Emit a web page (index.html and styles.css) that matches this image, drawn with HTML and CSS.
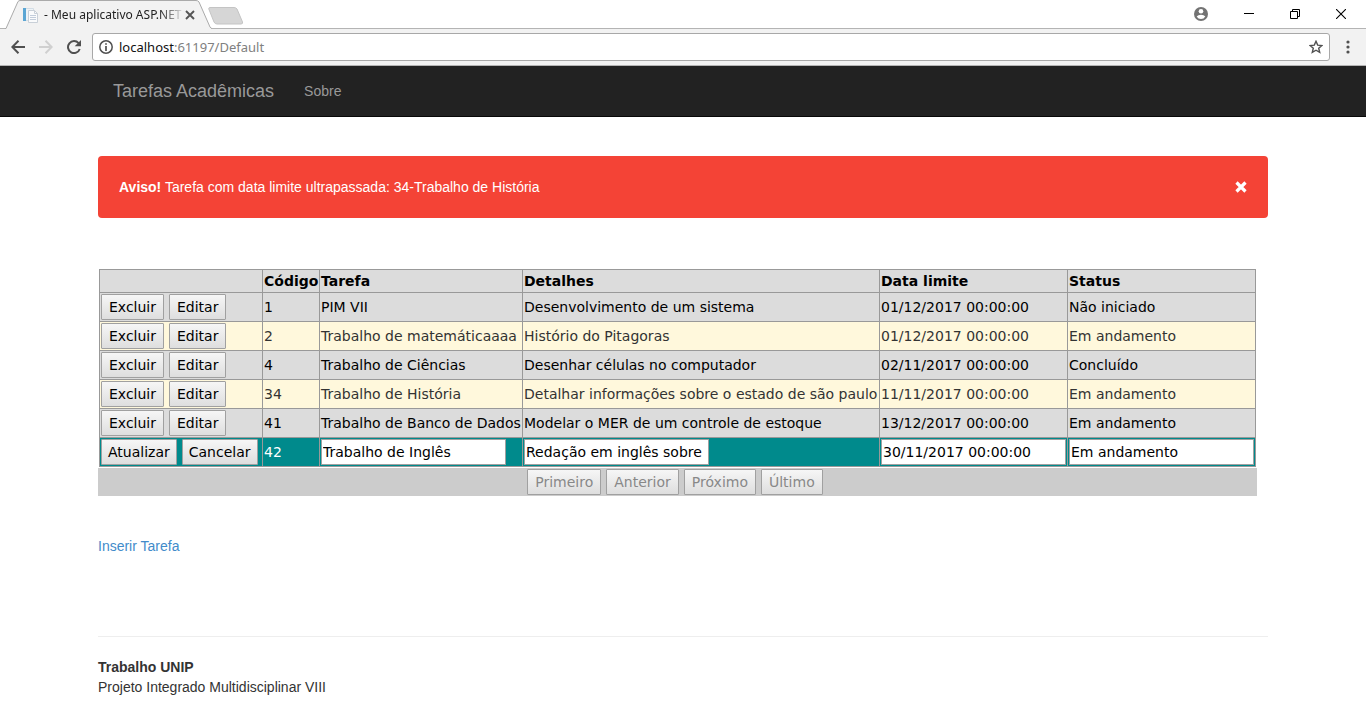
FILE: index.html
```html
<!DOCTYPE html>
<html lang="pt-BR">
<head>
<meta charset="utf-8">
<title>- Meu aplicativo ASP.NET</title>
<link rel="stylesheet" href="styles.css">
</head>
<body>
<header class="browser">
  <div class="tab-strip">
    <div class="tab">
      <svg class="tab-shape" width="207" height="29" viewBox="0 0 207 29"><path d="M0 28.500L1 28.500L13 1.500Q14 .5 15 .5H191Q193 .5 194 2L205 27Q206 28.500 207 28.500V29H0Z" fill="#f2f2f2"/><path d="M0 28.500L1 28.500L13 1.500Q14 .5 15 .5H191Q193 .5 194 2L205 27Q206 28.500 207 28.500" fill="none" stroke="#aaa"/></svg>
      <svg class="favicon" width="16" height="16" viewBox="0 0 16 16"><path d="M1.500 1.500H11.500V13.500H1.500Z" fill="#eef3f7" stroke="#d3dde5"/><path d="M1 1H4V14H1Z" fill="#5ba6d4"/><path d="M6.500 3.500H12.500L15.500 6.500V15.500H6.500Z" fill="#fafbfc" stroke="#c9d0d8"/><path d="M12.500 3.500V6.500H15.500" fill="none" stroke="#c9d0d8"/><path d="M8 8.500H14M8 10.500H14M8 12.500H14" stroke="#c3cddb"/></svg>
      <span class="tab-title">- Meu aplicativo ASP.NET</span>
      <button class="icon-button" aria-label="Fechar guia"><svg width="10" height="10" viewBox="0 0 10 10"><path d="M1 1L9 9M9 1L1 9" stroke="#555" stroke-width="1.900"/></svg></button>
    </div>
    <button class="icon-button new-tab" aria-label="Nova guia"><svg width="36" height="18" viewBox="0 0 36 18"><path d="M2 .5H26Q28 .5 29 2L34.500 15Q35 17 33 17H9Q7 17 6 15L.8 2Q.5 .5 2 .5Z" fill="#d6d6d6" stroke="#c4c4c4"/></svg></button>
    <div class="window-buttons">
      <button class="icon-button" aria-label="Perfil"><svg width="14" height="14" viewBox="0 0 14 14"><circle cx="7" cy="7" r="7" fill="#737373"/><circle cx="7" cy="4.300" r="2.300" fill="#fff"/><path d="M2.700 9.500Q4 7.700 7 7.700T11.300 9.500Q9.800 12 7 12T2.700 9.500Z" fill="#fff"/></svg></button>
      <button class="icon-button" aria-label="Minimizar"><svg width="10" height="10" viewBox="0 0 10 10"><path d="M0 4.500H10" stroke="#000"/></svg></button>
      <button class="icon-button" aria-label="Restaurar"><svg width="10" height="10" viewBox="0 0 10 10"><path d="M.5 2.500H7.500V9.500H.5ZM2.500 2.500V.5H9.500V7.500H7.500" fill="none" stroke="#000"/></svg></button>
      <button class="icon-button" aria-label="Fechar"><svg width="10" height="10" viewBox="0 0 10 10"><path d="M0 0L10 10M10 0L0 10" stroke="#000" stroke-width="1.100"/></svg></button>
    </div>
  </div>
  <div class="toolbar">
    <button class="icon-button" aria-label="Voltar"><svg width="14" height="14" viewBox="0 0 14 14"><path d="M14 7H1.500M7.500 .8L1.300 7L7.500 13.200" fill="none" stroke="#505050" stroke-width="2"/></svg></button>
    <button class="icon-button" aria-label="Avançar"><svg width="14" height="14" viewBox="0 0 14 14"><path d="M0 7H12.500M6.500 .8L12.700 7L6.500 13.200" fill="none" stroke="#d0d0d0" stroke-width="2"/></svg></button>
    <button class="icon-button" aria-label="Recarregar"><svg width="14" height="14" viewBox="0 0 14 14"><path d="M11.600 3.200A6 6 0 1 0 12.700 9" fill="none" stroke="#505050" stroke-width="2"/><path d="M14 0V6.300H7.700Z" fill="#505050"/></svg></button>
    <div class="address">
      <svg width="14" height="14" viewBox="0 0 14 14"><circle cx="7" cy="7" r="6.200" fill="none" stroke="#505050" stroke-width="1.500"/><path d="M7 3.200V4.800M7 6V11" stroke="#505050" stroke-width="1.700"/></svg>
      <span class="url"><span class="host">localhost</span>:61197/Default</span>
      <button class="icon-button" aria-label="Favoritar"><svg width="14" height="14" viewBox="0 0 14 14"><path d="M7 1.300L8.700 5.100L12.900 5.500L9.700 8.200L10.700 12.300L7 10.200L3.300 12.300L4.300 8.200L1.100 5.500L5.300 5.100Z" fill="none" stroke="#505050" stroke-width="1.400"/></svg></button>
    </div>
    <button class="icon-button menu" aria-label="Menu"><svg width="4" height="14" viewBox="0 0 4 14"><g fill="#505050"><circle cx="2" cy="2" r="1.600"/><circle cx="2" cy="7" r="1.600"/><circle cx="2" cy="12" r="1.600"/></g></svg></button>
  </div>
</header>
<nav class="navbar">
  <div class="container nav-links">
    <a class="brand" href="#">Tarefas Acadêmicas</a>
    <a href="#">Sobre</a>
  </div>
</nav>
<main class="container">
  <div class="alert" role="alert">
    <p><strong>Aviso!</strong> Tarefa com data limite ultrapassada: 34-Trabalho de História</p>
    <button class="icon-button" aria-label="Fechar aviso"><svg width="12" height="12" viewBox="0 0 12 12"><path d="M1.500 1.500L10.500 10.500M10.500 1.500L1.500 10.500" stroke="#fff" stroke-width="3.200"/></svg></button>
  </div>
  <div class="list">
    <table class="tasks">
      <colgroup><col class="col-actions"><col class="col-code"><col class="col-task"><col class="col-details"><col class="col-wide"><col class="col-wide"></colgroup>
      <thead>
        <tr><th></th><th>Código</th><th>Tarefa</th><th>Detalhes</th><th>Data limite</th><th>Status</th></tr>
      </thead>
      <tbody>
        <tr><td><div class="actions"><button class="btn">Excluir</button><button class="btn">Editar</button></div></td><td>1</td><td>PIM VII</td><td>Desenvolvimento de um sistema</td><td>01/12/2017 00:00:00</td><td>Não iniciado</td></tr>
        <tr class="alt"><td><div class="actions"><button class="btn">Excluir</button><button class="btn">Editar</button></div></td><td>2</td><td>Trabalho de matemáticaaaa</td><td>Histório do Pitagoras</td><td>01/12/2017 00:00:00</td><td>Em andamento</td></tr>
        <tr><td><div class="actions"><button class="btn">Excluir</button><button class="btn">Editar</button></div></td><td>4</td><td>Trabalho de Ciências</td><td>Desenhar células no computador</td><td>02/11/2017 00:00:00</td><td>Concluído</td></tr>
        <tr class="alt"><td><div class="actions"><button class="btn">Excluir</button><button class="btn">Editar</button></div></td><td>34</td><td>Trabalho de História</td><td>Detalhar informações sobre o estado de são paulo</td><td>11/11/2017 00:00:00</td><td>Em andamento</td></tr>
        <tr><td><div class="actions"><button class="btn">Excluir</button><button class="btn">Editar</button></div></td><td>41</td><td>Trabalho de Banco de Dados</td><td>Modelar o MER de um controle de estoque</td><td>13/12/2017 00:00:00</td><td>Em andamento</td></tr>
        <tr class="editing"><td><div class="actions"><button class="btn">Atualizar</button><button class="btn">Cancelar</button></div></td><td>42</td><td><input type="text" aria-label="Tarefa" value="Trabalho de Inglês"></td><td><input type="text" aria-label="Detalhes" value="Redação em inglês sobre"></td><td><input type="text" aria-label="Data limite" value="30/11/2017 00:00:00"></td><td><input type="text" aria-label="Status" value="Em andamento"></td></tr>
      </tbody>
    </table>
    <div class="pager">
      <button class="btn" disabled>Primeiro</button><button class="btn" disabled>Anterior</button><button class="btn" disabled>Próximo</button><button class="btn" disabled>Último</button>
    </div>
  </div>
  <a class="insert" href="#">Inserir Tarefa</a>
  <footer class="footer">
    <strong>Trabalho UNIP</strong>
    <p>Projeto Integrado Multidisciplinar VIII</p>
  </footer>
</main>
</body>
</html>
```
FILE: styles.css
```css
* { box-sizing: border-box; }
body {
  margin: 0;
  background: #fff;
  color: #333;
  font: 14px/20px "Liberation Sans", Arial, sans-serif;
}
p { margin: 0; }
a { color: #428bca; text-decoration: none; }
svg { display: block; }
.icon-button { display: block; flex: none; padding: 0; border: 0; background: none; }

.browser { font-family: "Noto Sans", sans-serif; }
.tab-strip { display: flex; align-items: flex-start; height: 29px; border-bottom: 1px solid #b4b4b4; }
.tab { position: relative; display: flex; align-items: center; width: 207px; height: 29px; margin-left: 5px; padding: 0 17px; }
.tab-shape { position: absolute; inset: 0; }
.favicon, .tab-title, .tab .icon-button { position: relative; }
.favicon { flex: none; }
.tab-title {
  flex: 1;
  margin: 0 0 0 6px;
  white-space: nowrap;
  color: #222;
  font-size: 12px;
  -webkit-mask-image: linear-gradient(to right, #000 82%, transparent);
  mask-image: linear-gradient(to right, #000 82%, transparent);
}
.new-tab { margin: 7px 0 0 -4px; }
.window-buttons { display: flex; align-items: center; gap: 36px; height: 27px; margin-left: auto; padding-right: 20px; }
.toolbar {
  display: flex;
  align-items: center;
  gap: 14px;
  height: 37px;
  padding: 0 16px 0 11px;
  background: #f2f2f2;
  border-bottom: 1px solid #b4b4b4;
}
.address {
  display: flex;
  flex: 1;
  align-items: center;
  gap: 6px;
  height: 28px;
  margin: 0 2px 0 -3px;
  padding: 0 6px;
  background: #fff;
  border: 1px solid #a8a8a8;
  border-radius: 3px;
}
.url { flex: 1; color: #808080; font-size: 13px; }
.host { color: #111; }

.container { width: 100%; max-width: 1170px; margin: 0 auto; }
.navbar { background: #222; border-bottom: 1px solid #080808; }
.nav-links { display: flex; align-items: center; gap: 30px; height: 50px; padding: 0 15px; }
.nav-links a { color: #999; }
.nav-links .brand { font-size: 18px; }

.alert {
  display: flex;
  align-items: center;
  justify-content: space-between;
  margin-top: 39px;
  padding: 21px;
  border-radius: 4px;
  background: #f44336;
  color: #fff;
}

.list { max-width: 1159px; margin-top: 51px; color: #000; font: 14px/20px "DejaVu Sans", Verdana, sans-serif; }
.tasks { width: calc(100% - 2px); margin: 0 1px; border-collapse: collapse; table-layout: fixed; background: #dcdcdc; }
.col-actions { width: 163px; }
.col-code { width: 57px; }
.col-task { width: 203px; }
.col-details { width: 357px; }
.col-wide { width: 188px; }
.tasks th, .tasks td { height: 29px; padding: 1px; border: 1px solid #999; text-align: left; white-space: nowrap; }
.tasks th { height: 23px; }
.alt { background: #fff8dc; color: #333; }
.editing { background: #008a8c; color: #fff; }
.actions { display: flex; gap: 5px; }
.btn {
  height: 26px;
  padding: 0 7px;
  border: 1px solid #a0a0a0;
  border-radius: 1px;
  background: linear-gradient(#f6f6f6, #dedede);
  color: #000;
  font: inherit;
}
.editing .btn { padding: 0 6px; }
.btn:disabled { color: #888; }
.tasks input {
  display: block;
  width: 185px;
  height: 26px;
  padding: 1px;
  border: 1px solid #a0a0a0;
  background: #fff;
  color: #000;
  font: inherit;
}
.pager { display: flex; justify-content: center; gap: 5px; margin-top: 1px; padding: 1px 6px 1px 1px; background: #ccc; }

.insert { display: inline-block; margin-top: 40px; }
.footer { margin-top: 80px; padding-top: 20px; border-top: 1px solid #eee; }
```
